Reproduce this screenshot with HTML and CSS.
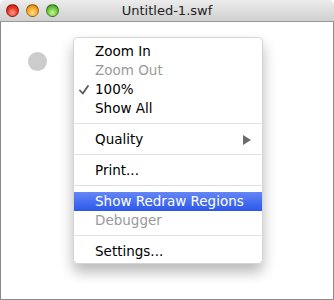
FILE: index.html
```html
<!DOCTYPE html>
<html>
<head>
<meta charset="utf-8">
<link rel="stylesheet" href="styles.css">
</head>
<body>
<div class="window">
  <div class="titlebar">
    <div class="lights">
      <span class="light red"></span>
      <span class="light yellow"></span>
      <span class="light green"></span>
    </div>
    <div class="title">Untitled-1.swf</div>
  </div>
  <div class="stage">
    <div class="dot"></div>
  </div>
  <div class="menu">
    <div class="item">Zoom In</div>
    <div class="item disabled">Zoom Out</div>
    <div class="item checked"><svg class="check" width="10" height="10" viewBox="0 0 10 10"><path d="M1 5.5 L3.8 8.5 L9 1" fill="none" stroke="#5a5a5a" stroke-width="1.8" stroke-linecap="round" stroke-linejoin="round"/></svg>100%</div>
    <div class="item">Show All</div>
    <div class="sep"></div>
    <div class="item">Quality<svg class="arrow" width="8" height="10" viewBox="0 0 8 10"><path d="M0 0 L8 5 L0 10 Z" fill="#6b6b6b"/></svg></div>
    <div class="sep"></div>
    <div class="item">Print...</div>
    <div class="sep"></div>
    <div class="item active">Show Redraw Regions</div>
    <div class="item disabled">Debugger</div>
    <div class="sep"></div>
    <div class="item">Settings...</div>
  </div>
</div>
</body>
</html>
```
FILE: styles.css
```css
html, body {
  margin: 0;
  padding: 0;
  background: #ffffff;
}
body {
  width: 334px;
  height: 300px;
  overflow: hidden;
  font-family: "DejaVu Sans", "Liberation Sans", sans-serif;
}
.window {
  position: relative;
  width: 334px;
  height: 300px;
  display: flex;
  flex-direction: column;
  box-sizing: border-box;
}
.titlebar {
  height: 22px;
  flex: none;
  background: linear-gradient(#ececec, #d0d0d0);
  border-bottom: 1px solid #999;
  border-radius: 5px 5px 0 0;
  box-sizing: border-box;
  position: relative;
  display: flex;
  align-items: center;
}
.lights {
  display: flex;
  gap: 7px;
  padding-left: 6px;
}
.light {
  width: 13px;
  height: 13px;
  border-radius: 50%;
  box-sizing: border-box;
  border: 1px solid rgba(0,0,0,0.35);
}
.red { background: radial-gradient(circle at 50% 70%, #ff9d8f 0%, #e8331f 55%, #a3140a 100%); }
.yellow { background: radial-gradient(circle at 50% 70%, #ffe08a 0%, #f5a623 55%, #b8650a 100%); }
.green { background: radial-gradient(circle at 50% 70%, #c8f59a 0%, #6ac43b 55%, #2f7d16 100%); }
.title {
  position: absolute;
  left: 0;
  right: 0;
  top: 0;
  line-height: 21px;
  text-align: center;
  font-size: 13px;
  color: #222;
}
.stage {
  flex: 1;
  border: 1px solid #8a8a8a;
  border-top: none;
  background: #fff;
  padding: 30px 0 0 27px;
}
.dot {
  width: 19px;
  height: 19px;
  border-radius: 50%;
  background: #cccccc;
}
.menu {
  position: absolute;
  left: 73px;
  top: 37px;
  width: 190px;
  height: 227px;
  box-sizing: border-box;
  padding: 4px 0;
  background: rgba(255,255,255,0.97);
  border: 1px solid #d4d4d4;
  border-radius: 4px 4px 5px 5px;
  box-shadow: 0 8px 14px rgba(0,0,0,0.28);
  font-size: 13.5px;
  color: #000;
}
.item {
  position: relative;
  height: 19px;
  line-height: 19px;
  padding-left: 21px;
  white-space: nowrap;
}
.item.disabled { color: #9a9a9a; }
.item.active {
  background: linear-gradient(#6486f6, #2c58ea);
  color: #fff;
}
.check {
  position: absolute;
  left: 5px;
  top: 5px;
}
.arrow {
  position: absolute;
  right: 11px;
  top: 5px;
}
.sep {
  height: 1px;
  margin: 5px 0 6px;
  background: #e2e2e2;
}
```
